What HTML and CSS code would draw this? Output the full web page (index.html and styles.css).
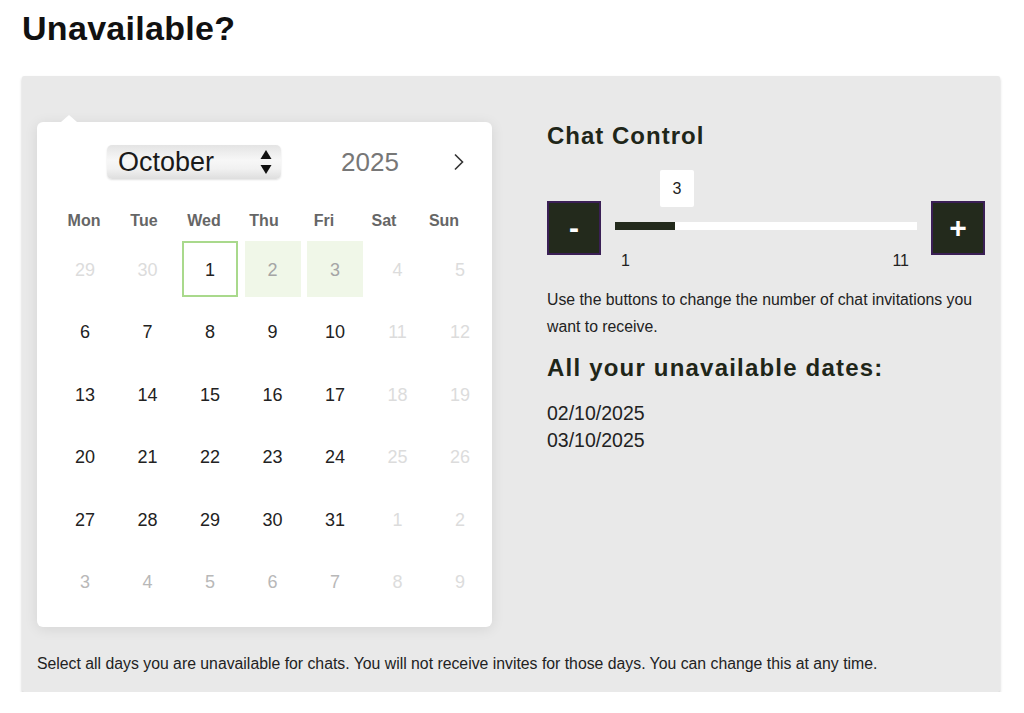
FILE: index.html
```html
<!DOCTYPE html>
<html lang="en">
<head>
    <meta charset="UTF-8">
    <meta name="viewport" content="width=device-width, initial-scale=1.0">
    <title>Unavailable?</title>

    <link rel="stylesheet" href="styles.css">

</head>
<body>

    <h1 class="page-title">Unavailable?</h1>

    <div class="panel">
        <div class="panel-row">

            <!-- calendar -->
            <div class="calendar">
                <div class="cal-head">
                    <div class="month-select">
                        <span>October</span>
                        <svg class="updown" width="12" height="26" viewBox="0 0 12 26">
                            <path d="M6 1 L11.5 10 L0.5 10 Z" fill="#111"/>
                            <path d="M6 25 L11.5 16 L0.5 16 Z" fill="#111"/>
                        </svg>
                    </div>
                    <div class="year">2025</div>
                    <svg class="next" width="12" height="18" viewBox="0 0 12 18">
                        <path d="M2 1.5 L9.5 9 L2 16.5" fill="none" stroke="#333" stroke-width="1.6"/>
                    </svg>
                </div>

                <div class="weekdays">
                    <span>Mon</span><span>Tue</span><span>Wed</span><span>Thu</span><span>Fri</span><span>Sat</span><span>Sun</span>
                </div>

                <div class="days">
                    <span class="day off">29</span>
                    <span class="day off">30</span>
                    <span class="day today">1</span>
                    <span class="day picked">2</span>
                    <span class="day picked">3</span>
                    <span class="day off">4</span>
                    <span class="day off">5</span>

                    <span class="day">6</span>
                    <span class="day">7</span>
                    <span class="day">8</span>
                    <span class="day">9</span>
                    <span class="day">10</span>
                    <span class="day off">11</span>
                    <span class="day off">12</span>

                    <span class="day">13</span>
                    <span class="day">14</span>
                    <span class="day">15</span>
                    <span class="day">16</span>
                    <span class="day">17</span>
                    <span class="day off">18</span>
                    <span class="day off">19</span>

                    <span class="day">20</span>
                    <span class="day">21</span>
                    <span class="day">22</span>
                    <span class="day">23</span>
                    <span class="day">24</span>
                    <span class="day off">25</span>
                    <span class="day off">26</span>

                    <span class="day">27</span>
                    <span class="day">28</span>
                    <span class="day">29</span>
                    <span class="day">30</span>
                    <span class="day">31</span>
                    <span class="day off">1</span>
                    <span class="day off">2</span>

                    <span class="day next-month">3</span>
                    <span class="day next-month">4</span>
                    <span class="day next-month">5</span>
                    <span class="day next-month">6</span>
                    <span class="day next-month">7</span>
                    <span class="day off">8</span>
                    <span class="day off">9</span>
                </div>
            </div>

            <!-- chat control -->
            <div class="side">
                <h2 class="side-title">Chat Control</h2>

                <div class="slider">
                    <button class="step">-</button>
                    <div class="range">
                        <div class="track">
                            <div class="fill" style="width: 20%"></div>
                            <div class="bubble" style="left: 20.5%">3</div>
                        </div>
                        <div class="range-labels">
                            <span>1</span>
                            <span>11</span>
                        </div>
                    </div>
                    <button class="step">+</button>
                </div>

                <p class="hint">Use the buttons to change the number of chat invitations you want to receive.</p>

                <h2 class="side-title dates-title">All your unavailable dates:</h2>
                <div class="dates">
                    <div>02/10/2025</div>
                    <div>03/10/2025</div>
                </div>
            </div>

        </div>

        <p class="note">Select all days you are unavailable for chats. You will not receive invites for those days. You can change this at any time.</p>
    </div>

</body>
</html>
```

FILE: styles.css
```css
body {
    margin: 0;
    padding: 0 24px 0 22px;
    background: #fff;
    font-family: "Liberation Sans", Arial, sans-serif;
    color: #222;
}

.page-title {
    margin: 0;
    padding-top: 8px;
    font-size: 34px;
    line-height: 40px;
    color: #111;
    letter-spacing: 0.3px;
}

.panel {
    margin-top: 28px;
    background-color: #e9e9e9;
    border-radius: 2px;
    box-shadow: 0 2px 3px rgba(0, 0, 0, 0.22);
    padding: 46px 15px 20px;
}

.panel-row {
    display: flex;
    align-items: flex-start;
}

/* calendar */
.calendar {
    position: relative;
    width: 455px;
    height: 505px;
    box-sizing: border-box;
    background: #fff;
    border-radius: 6px;
    box-shadow: 0 2px 14px rgba(0, 0, 0, 0.09);
    padding: 23px 4px 17px 20px;
}
.calendar::before {
    content: "";
    position: absolute;
    top: -7px;
    left: 24px;
    border-left: 8px solid transparent;
    border-right: 8px solid transparent;
    border-bottom: 7px solid #fff;
}

.cal-head {
    display: flex;
    align-items: center;
    height: 34px;
    padding-left: 50px;
}
.month-select {
    display: flex;
    align-items: center;
    justify-content: space-between;
    width: 174px;
    height: 34px;
    box-sizing: border-box;
    padding: 0 9px 0 11px;
    border-radius: 5px;
    background: linear-gradient(#e4e4e4, #f7f7f7 45%, #f1f1f1 70%, #dedede);
    box-shadow: 0 1px 2px rgba(0, 0, 0, 0.12);
    font-size: 27px;
    color: #1a1a1a;
}
.year {
    margin-left: 60px;
    font-size: 26px;
    color: #777;
}
.next {
    margin-left: 54px;
}

.weekdays {
    display: grid;
    grid-template-columns: repeat(7, 60px);
    margin: 22px 0 0 -3px;
    height: 40px;
    align-items: center;
    text-align: center;
    font-size: 16px;
    font-weight: bold;
    color: #666;
}

.days {
    display: grid;
    grid-template-columns: repeat(7, 56px);
    grid-auto-rows: 56px;
    gap: 6.5px;
    margin-top: 0;
}
.day {
    display: flex;
    align-items: center;
    justify-content: center;
    box-sizing: border-box;
    padding-top: 2px;
    font-size: 18px;
    color: #222;
}
.day.off {
    color: #dcdcdc;
}
.day.next-month {
    color: #b8b8b8;
}
.day.today {
    border: 2px solid #a9d98c;
}
.day.picked {
    background-color: #f0f7e8;
    color: #a5a5a5;
}

/* chat control */
.side {
    margin-left: 55px;
    width: 438px;
}
.side-title {
    margin: 0;
    font-size: 24px;
    line-height: 28px;
    color: #1f2619;
    letter-spacing: 1px;
}

.slider {
    display: flex;
    align-items: flex-start;
    margin-top: 51px;
}
.step {
    width: 54px;
    height: 54px;
    padding: 0;
    border: 2px solid #3a1f55;
    background-color: #232a1c;
    color: #fff;
    font-family: "Liberation Sans", Arial, sans-serif;
    font-size: 30px;
    font-weight: bold;
    line-height: 1;
}
.range {
    flex: 1;
    margin: 21px 14px 0;
}
.track {
    position: relative;
    height: 8px;
    background: #fff;
}
.fill {
    height: 8px;
    background: #232a1c;
}
.bubble {
    position: absolute;
    bottom: 23px;
    width: 34px;
    height: 37px;
    margin-left: -17px;
    background: #fff;
    border-radius: 2px;
    display: flex;
    align-items: center;
    justify-content: center;
    font-size: 16px;
    color: #222;
}
.range-labels {
    display: flex;
    justify-content: space-between;
    padding: 0 8px 0 6px;
    margin-top: 22px;
    font-size: 16px;
    line-height: 18px;
}

.hint {
    margin: 16px 0 0;
    font-size: 15.8px;
    line-height: 27px;
    color: #222;
}
.dates-title {
    margin-top: 13px;
    line-height: 30px;
    letter-spacing: 1.2px;
}
.dates {
    margin-top: 17px;
    font-size: 19.5px;
    line-height: 27px;
    color: #222;
}

.note {
    margin: 29px 0 0;
    font-size: 15.8px;
    line-height: 16px;
    color: #222;
}
```
